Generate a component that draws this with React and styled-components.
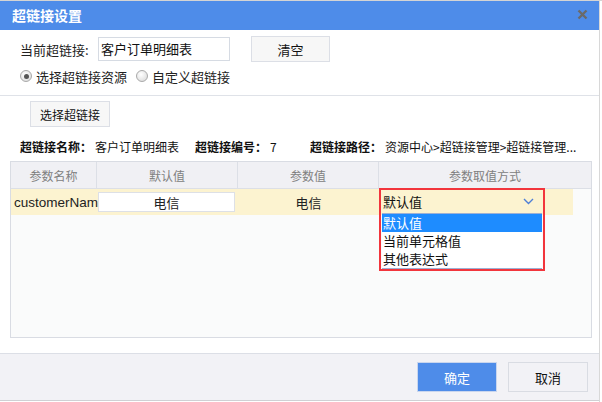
import React from "react";
import styled, { createGlobalStyle } from "styled-components";

const GlobalStyle = createGlobalStyle`
  body {
    margin: 0;
    background: #ffffff;
    font-family: "Noto Sans CJK SC", "Noto Sans", sans-serif;
    color: #222;
  }
`;

const columns = ["参数名称", "默认值", "参数值", "参数取值方式"];
const options = ["默认值", "当前单元格值", "其他表达式"];

const App = () => {
  return (
    <>
      <GlobalStyle />
      <Page>
        <Dialog>
          <TitleBar>
            <Title>超链接设置</Title>
            <CloseIcon width="11" height="11" viewBox="0 0 11 11">
              <path d="M1.5 1.5 L9.5 9.5 M9.5 1.5 L1.5 9.5" stroke="#6a6a6a" strokeWidth="2.4" />
            </CloseIcon>
          </TitleBar>
          <Body>
            <TopSection>
              <FieldRow>
                <Label>当前超链接:</Label>
                <TextBox>客户订单明细表</TextBox>
                <PlainButton $width={79} $ml={21}>清空</PlainButton>
              </FieldRow>
              <RadioRow>
                <RadioItem>
                  <Radio $checked />
                  <span>选择超链接资源</span>
                </RadioItem>
                <RadioItem>
                  <Radio />
                  <span>自定义超链接</span>
                </RadioItem>
              </RadioRow>
            </TopSection>
            <PickButton>选择超链接</PickButton>
            <InfoLine>
              <InfoItem $width={175}>
                <b>超链接名称：</b>客户订单明细表
              </InfoItem>
              <InfoItem $width={115}>
                <b>超链接编号：</b>7
              </InfoItem>
              <InfoItem>
                <b>超链接路径：</b>资源中心&gt;超链接管理&gt;超链接管理...
              </InfoItem>
            </InfoLine>
            <Table>
              <HeadRow>
                {columns.map((c) => (
                  <HeadCell key={c}>{c}</HeadCell>
                ))}
              </HeadRow>
              <DataRow>
                <NameCell>customerNam</NameCell>
                <Cell>
                  <CellInput>电信</CellInput>
                </Cell>
                <Cell $center>电信</Cell>
                <SelectCell>
                  <SelectFrame>
                    <SelectHead>
                      <span>默认值</span>
                      <svg width="11" height="7" viewBox="0 0 11 7">
                        <path d="M1 1 L5.5 5.5 L10 1" fill="none" stroke="#4f7fd6" strokeWidth="1.4" />
                      </svg>
                    </SelectHead>
                    <OptionList>
                      {options.map((o, i) => (
                        <Option key={o} $active={i === 0}>
                          {o}
                        </Option>
                      ))}
                    </OptionList>
                  </SelectFrame>
                </SelectCell>
              </DataRow>
            </Table>
          </Body>
          <Footer>
            <PrimaryButton>确定</PrimaryButton>
            <FooterButton>取消</FooterButton>
          </Footer>
        </Dialog>
        <Gutter />
      </Page>
    </>
  );
};

export default App;

const Page = styled.div`
  display: flex;
  width: 602px;
  height: 402px;
  border-top: 1px solid #d4d4d4;
  box-sizing: border-box;
  overflow: hidden;
`;

const Dialog = styled.div`
  width: 600px;
  height: 400px;
  display: flex;
  flex-direction: column;
  background: #ffffff;
  border-bottom: 1px solid #d0d0d4;
  box-sizing: border-box;
`;

const Gutter = styled.div`
  width: 2px;
  background: #ffffff;
  border-left: 1px solid #d8d8d8;
`;

const TitleBar = styled.div`
  height: 29px;
  flex-shrink: 0;
  display: flex;
  align-items: center;
  justify-content: space-between;
  padding: 0 11px 2px 12px;
  box-sizing: border-box;
  background: #4e8ce9;
`;

const Title = styled.span`
  color: #ffffff;
  font-size: 14px;
  font-weight: bold;
`;

const CloseIcon = styled.svg`
  display: block;
`;

const Body = styled.div`
  flex: 1;
  display: flex;
  flex-direction: column;
  background: #ffffff;
`;

const TopSection = styled.div`
  height: 66px;
  box-sizing: border-box;
  padding: 6px 20px 0;
  border-bottom: 1px solid #dfe2e8;
`;

const FieldRow = styled.div`
  display: flex;
  align-items: center;
  height: 26px;
`;

const Label = styled.span`
  width: 78px;
  font-size: 13px;
  color: #222;
`;

const TextBox = styled.div`
  width: 132px;
  height: 24px;
  box-sizing: border-box;
  border: 1px solid #d6dbe3;
  padding: 0 2px;
  font-size: 13px;
  line-height: 22px;
  color: #111;
`;

const PlainButton = styled.div`
  width: ${({ $width }) => $width}px;
  height: 26px;
  margin-left: ${({ $ml }) => $ml || 0}px;
  box-sizing: border-box;
  border: 1px solid #dcdfe6;
  background: #f7f7f7;
  display: flex;
  align-items: center;
  justify-content: center;
  font-size: 13px;
  color: #111;
`;

const RadioRow = styled.div`
  display: flex;
  align-items: center;
  height: 16px;
  margin-top: 6px;
  gap: 9px;
`;

const RadioItem = styled.label`
  display: flex;
  align-items: center;
  gap: 4px;
  font-size: 13px;
  color: #222;
`;

const Radio = styled.span`
  width: 12px;
  height: 12px;
  box-sizing: border-box;
  border-radius: 50%;
  border: 1px solid #a9a9a9;
  background: radial-gradient(circle at 40% 35%, #ffffff, #d6d6d6);
  position: relative;
  &::after {
    content: "";
    display: ${({ $checked }) => ($checked ? "block" : "none")};
    position: absolute;
    left: 2.5px;
    top: 2.5px;
    width: 5px;
    height: 5px;
    border-radius: 50%;
    background: #555;
  }
`;

const PickButton = styled.div`
  width: 80px;
  height: 26px;
  margin: 5px 0 0 30px;
  box-sizing: border-box;
  border: 1px solid #dcdfe6;
  background: #f7f7f7;
  display: flex;
  align-items: center;
  justify-content: center;
  font-size: 12px;
  color: #111;
`;

const InfoLine = styled.div`
  display: flex;
  align-items: center;
  height: 16px;
  margin: 11px 0 0 20px;
  font-size: 12px;
  color: #111;
  white-space: nowrap;
  b {
    font-weight: bold;
    margin-right: 3px;
  }
`;

const InfoItem = styled.span`
  width: ${({ $width }) => ($width ? `${$width}px` : "auto")};
`;

const Table = styled.div`
  margin: 7px 0 0 10px;
  width: 582px;
  height: 177px;
  box-sizing: border-box;
  border: 1px solid #d9dce3;
  background: #fafbfb;
`;

const HeadRow = styled.div`
  display: grid;
  grid-template-columns: 86px 141px 141px 1fr;
  height: 26px;
  background: #f0f0f4;
  border-bottom: 1px solid #dcdfe6;
`;

const HeadCell = styled.div`
  display: flex;
  align-items: center;
  justify-content: center;
  font-size: 12px;
  color: #808080;
  border-right: 1px solid #dcdfe6;
  &:last-child {
    border-right: none;
  }
`;

const DataRow = styled.div`
  display: grid;
  grid-template-columns: 86px 141px 141px 194px;
  height: 26px;
  background: #fcf3d0;
  width: 562px;
`;

const Cell = styled.div`
  display: flex;
  align-items: center;
  justify-content: ${({ $center }) => ($center ? "center" : "flex-start")};
  font-size: 13px;
  color: #222;
`;

const NameCell = styled(Cell)`
  padding-left: 3px;
  white-space: nowrap;
  font-family: "Liberation Sans", "Noto Sans", sans-serif;
  font-size: 13.5px;
`;

const CellInput = styled.div`
  width: 137px;
  height: 20px;
  margin-left: 1px;
  box-sizing: border-box;
  border: 1px solid #dde0e6;
  background: #ffffff;
  display: flex;
  align-items: center;
  justify-content: center;
  font-size: 13px;
  color: #222;
`;

const SelectCell = styled.div`
  position: relative;
`;

const SelectFrame = styled.div`
  position: absolute;
  left: 0;
  top: -1px;
  width: 166px;
  box-sizing: border-box;
  border: 2px solid #f2353c;
  z-index: 2;
`;

const SelectHead = styled.div`
  height: 23px;
  display: flex;
  align-items: center;
  justify-content: space-between;
  padding: 0 9px 0 2px;
  font-size: 13px;
  color: #111;
`;

const OptionList = styled.div`
  background: #ffffff;
  border-top: 1px solid #9db0d4;
  border-bottom: 1px solid #9db0d4;
  margin: 0 1px;
`;

const Option = styled.div`
  height: 18px;
  line-height: 18px;
  padding-left: 1px;
  font-size: 13px;
  background: ${({ $active }) => ($active ? "#1e8cff" : "#ffffff")};
  color: ${({ $active }) => ($active ? "#ffffff" : "#111")};
`;

const Footer = styled.div`
  height: 47px;
  flex-shrink: 0;
  box-sizing: border-box;
  border-top: 1px solid #dcdfe6;
  background: #f2f2f6;
  display: flex;
  align-items: center;
  justify-content: flex-end;
  gap: 11px;
  padding: 0 11px 0 0;
`;

const FooterButton = styled.div`
  width: 80px;
  height: 30px;
  box-sizing: border-box;
  border: 1px solid #d9dce3;
  background: #f2f2f6;
  display: flex;
  align-items: center;
  justify-content: center;
  font-size: 13px;
  color: #111;
`;

const PrimaryButton = styled(FooterButton)`
  background: #4e8ce9;
  border-color: #c9d6ee;
  color: #ffffff;
`;
